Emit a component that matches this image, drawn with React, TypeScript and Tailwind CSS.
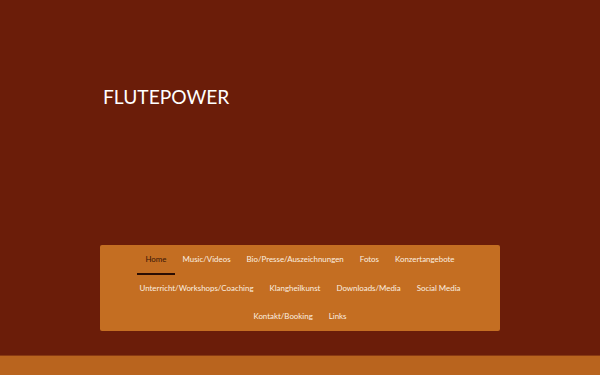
const rows = [
  ['Home', 'Music/Videos', 'Bio/Presse/Auszeichnungen', 'Fotos', 'Konzertangebote'],
  ['Unterricht/Workshops/Coaching', 'Klangheilkunst', 'Downloads/Media', 'Social Media'],
  ['Kontakt/Booking', 'Links'],
];

export default function App() {
  return (
    <div className="w-[600px] h-[375px] bg-[#6b1d09] flex flex-col overflow-hidden" style={{ fontFamily: 'Lato, "Open Sans", sans-serif' }}>
      <header className="px-[103px] pt-[85px] h-[245px]">
        <h1 className="text-[19.2px] leading-[24px] text-white">FLUTEPOWER</h1>
      </header>

      <nav className="mx-[100px] w-[400px] h-[86px] bg-[#c46e22] rounded-[2px] pt-[1px]">
        {rows.map((row, i) => (
          <ul key={i} className="flex justify-center h-[28.5px]">
            {row.map((item) => (
              <li key={item} className="relative px-2 flex items-center">
                <span className={`text-[7.9px] ${item === 'Home' ? 'text-[#3a1606]' : 'text-[#fbeee0]'}`}>{item}</span>
                {item === 'Home' && <span className="absolute left-0 right-0 bottom-0 h-[2px] bg-[#2a0d03]" />}
              </li>
            ))}
          </ul>
        ))}
      </nav>

      <div className="flex-1" />
      <footer className="h-[20px] bg-[#b9641e] border-t border-[#8a3a12]" />
    </div>
  );
}
